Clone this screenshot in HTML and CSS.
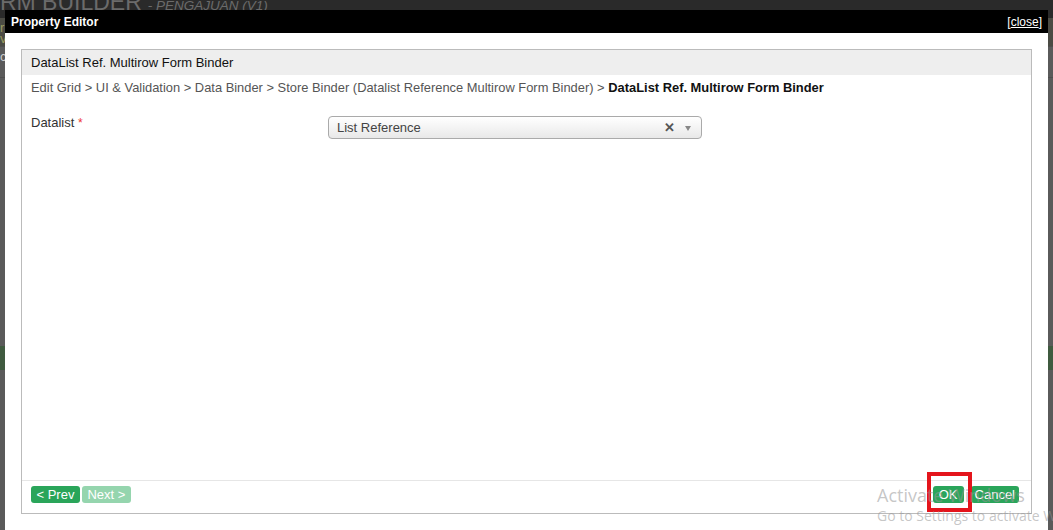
FILE: index.html
```html
<!DOCTYPE html>
<html>
<head>
<meta charset="utf-8">
<link rel="stylesheet" href="styles.css">
</head>
<body>
<div class="page">
  <div class="page-head">
    <span class="page-title">FORM BUILDER</span><span class="page-sub">- PENGAJUAN (V1)</span>
  </div>
  <div class="page-side">
    <div class="side-row olive">r<br>vo</div>
    <div class="side-row">c</div>
    <div class="side-green"></div>
  </div>
</div>

<div class="dialog">
  <div class="dialog-bar">
    <span class="dialog-title">Property Editor</span>
    <span class="dialog-close">[<u>close</u>]</span>
  </div>
  <div class="dialog-body">
    <div class="panel">
      <div class="panel-head">DataList Ref. Multirow Form Binder</div>
      <div class="crumbs">Edit Grid &gt; UI &amp; Validation &gt; Data Binder &gt; Store Binder (Datalist Reference Multirow Form Binder) &gt; <b>DataList Ref. Multirow Form Binder</b></div>
      <div class="field">
        <label class="field-label">Datalist <span class="req">*</span></label>
        <div class="select">
          <span class="select-value">List Reference</span>
          <span class="select-clear">&#x2715;</span>
          <span class="select-arrow"></span>
        </div>
      </div>
      <div class="panel-fill"></div>
      <div class="panel-foot">
        <div class="nav">
          <span class="btn">&lt; Prev</span>
          <span class="btn btn-dis">Next &gt;</span>
        </div>
        <div class="actions">
          <span class="btn btn-ok">OK</span>
          <span class="btn btn-cancel">Cancel</span>
        </div>
      </div>
    </div>
  </div>
</div>

<div class="highlight"></div>
<div class="watermark">
  <div class="wm-big">Activate Windows</div>
  <div class="wm-small">Go to Settings to activate Windows.</div>
</div>
</body>
</html>
```

FILE: styles.css
```css
html, body {
  margin: 0;
  padding: 0;
}
body {
  width: 1053px;
  height: 530px;
  overflow: hidden;
  position: relative;
  background: #5c5c5c;
  font-family: "Liberation Sans", Arial, sans-serif;
}
.page {
  height: 530px;
  display: flex;
  flex-direction: column;
}
.page-head {
  height: 18px;
  background: #2a2a2a;
  overflow: hidden;
  white-space: nowrap;
  margin-left: -32px;
  line-height: 18px;
}
.page-title {
  font-size: 23px;
  color: #6b6b6b;
  position: relative;
  top: -7px;
}
.page-sub {
  font-size: 13.5px;
  font-style: italic;
  color: #6b6b6b;
  margin-left: 6px;
  position: relative;
  top: -7px;
}
.page-side {
  flex: 1;
  background: #5a5a5a;
  display: flex;
  flex-direction: column;
}
.side-row {
  height: 26px;
  font-size: 13px;
  color: #ccc;
  border-bottom: 1px solid #4e4e4e;
  padding-top: 4px;
  line-height: 11px;
  overflow: hidden;
}
.side-row.olive {
  background: #4b4b44;
  color: #9a9a60;
  height: 24px;
}
.side-green {
  margin-top: 268px;
  height: 24px;
  background: #3f5a3f;
}

.dialog {
  position: absolute;
  left: 5px;
  top: 10px;
  width: 1043px;
  height: 520px;
  background: #fff;
  display: flex;
  flex-direction: column;
}
.dialog-bar {
  height: 23px;
  background: #000;
  color: #fff;
  display: flex;
  align-items: center;
  justify-content: space-between;
  padding: 0 6px;
  font-size: 12px;
}
.dialog-title {
  font-weight: bold;
}
.dialog-close {
  color: #fff;
  font-size: 12px;
}
.dialog-body {
  flex: 1;
  padding: 16px 16px 16px 16px;
  display: flex;
}
.panel {
  flex: 1;
  height: 463px;
  border: 1px solid #bbbbbb;
  display: flex;
  flex-direction: column;
}
.panel-head {
  height: 25px;
  line-height: 25px;
  background: #eeeeee;
  padding-left: 9px;
  font-size: 13px;
  color: #111;
}
.crumbs {
  padding: 5px 9px 0;
  font-size: 12.9px;
  color: #555;
  line-height: 16px;
  white-space: nowrap;
}
.crumbs b {
  color: #111;
}
.field {
  display: flex;
  align-items: flex-start;
  padding: 19px 0 0 9px;
}
.field-label {
  width: 297px;
  font-size: 13px;
  color: #333;
}
.req {
  color: #e33;
  font-size: 12px;
}
.select {
  width: 374px;
  height: 23px;
  border: 1px solid #aaa;
  border-radius: 4px;
  background: linear-gradient(#ffffff 0%, #f4f4f4 50%, #e8e8e8 100%);
  display: flex;
  align-items: center;
  margin-top: 1px;
  padding-left: 8px;
  box-sizing: border-box;
}
.select-value {
  flex: 1;
  font-size: 13px;
  color: #444;
}
.select-clear {
  font-size: 13px;
  font-weight: bold;
  color: #555;
  margin-right: 10px;
}
.select-arrow {
  width: 0;
  height: 0;
  border-left: 3.5px solid transparent;
  border-right: 3.5px solid transparent;
  border-top: 5px solid #888;
  margin-right: 10px;
  margin-top: 1px;
}
.panel-fill {
  flex: 1;
}
.panel-foot {
  height: 33px;
  border-top: 1px solid #e6e6e6;
  display: flex;
  justify-content: space-between;
  padding: 5px 12px 0 9px;
  box-sizing: border-box;
}
.nav, .actions {
  display: flex;
  gap: 2px;
  height: 17px;
}
.actions {
  gap: 7px;
}
.btn {
  height: 17px;
  line-height: 17px;
  padding: 0 5.5px;
  background: #2aa55a;
  color: #fff;
  font-size: 13px;
  border-radius: 3px;
}
.btn-dis {
  background: #95d5ae;
}
.btn-ok {
  padding: 0 6px;
}
.btn-cancel {
  padding: 0 4px;
}
.highlight {
  position: absolute;
  left: 927px;
  top: 472px;
  width: 37px;
  height: 32px;
  border: 4px solid #e4151c;
}
.watermark {
  position: absolute;
  left: 877px;
  top: 484px;
  white-space: nowrap;
  font-family: "Open Sans", "Noto Sans", sans-serif;
  color: rgba(150, 150, 150, 0.55);
  pointer-events: none;
}
.wm-big {
  font-size: 18px;
  line-height: 22px;
}
.wm-small {
  font-size: 14px;
  line-height: 20px;
}
```
